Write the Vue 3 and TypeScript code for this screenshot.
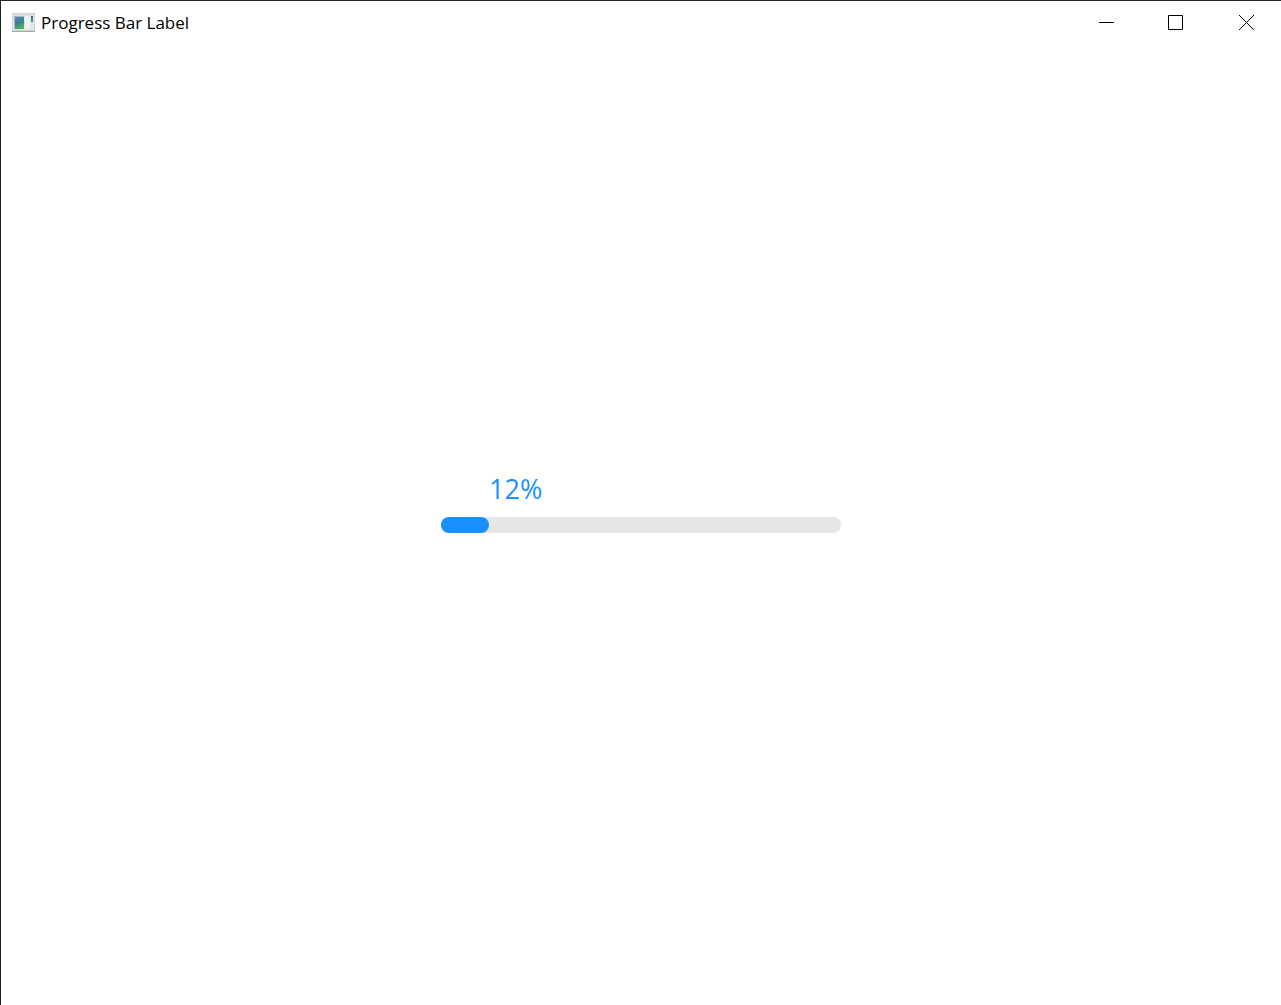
<script setup lang="ts">
import { ref } from 'vue'

const title = 'Progress Bar Label'
const progress = ref<number>(12)
</script>

<template>
  <div class="window">
    <header class="titlebar">
      <svg class="app-icon" viewBox="0 0 24 20" aria-hidden="true">
        <defs>
          <linearGradient id="pane" x1="0" y1="0" x2="0.4" y2="1">
            <stop offset="0" stop-color="#5f8fae" />
            <stop offset="0.5" stop-color="#3b7d9c" />
            <stop offset="1" stop-color="#4fae62" />
          </linearGradient>
          <linearGradient id="strip" x1="0" y1="0" x2="0" y2="1">
            <stop offset="0" stop-color="#2f5fa5" />
            <stop offset="1" stop-color="#4f9a86" />
          </linearGradient>
        </defs>
        <rect x="0" y="0" width="23" height="19" fill="#d3d5d7" />
        <rect x="1" y="1" width="21" height="2" fill="#dcdfe1" />
        <rect x="1" y="3" width="21" height="14" fill="#e0e5e8" />
        <rect x="0" y="18" width="23" height="1" fill="#9fa9ac" />
        <rect x="2" y="3" width="10" height="13" fill="#9fb9c8" />
        <rect x="3" y="4" width="9" height="12" fill="url(#pane)" />
        <rect x="13" y="3" width="5" height="13" fill="#eff1f3" />
        <rect x="19" y="3" width="2" height="6" fill="url(#strip)" />
      </svg>
      <h1 class="title">{{ title }}</h1>
      <div class="controls">
        <button type="button" aria-label="Minimize">
          <svg viewBox="0 0 16 16"><path d="M1 7.5H16" /></svg>
        </button>
        <button type="button" aria-label="Maximize">
          <svg viewBox="0 0 16 16"><path d="M.5 .5H14.500V14.500H.5Z" /></svg>
        </button>
        <button type="button" aria-label="Close">
          <svg viewBox="0 0 16 16"><path d="M1 0L16 15M16 0L1 15" /></svg>
        </button>
      </div>
    </header>
    <main class="content">
      <div class="progress">
        <div class="label-row">
          <span class="spacer" :style="{ width: progress + '%' }"></span>
          <span class="label">{{ progress }}%</span>
        </div>
        <div class="track" role="progressbar" aria-label="Progress" :aria-valuenow="progress" aria-valuemin="0" aria-valuemax="100">
          <div class="fill" :style="{ width: progress + '%' }"></div>
        </div>
      </div>
    </main>
  </div>
</template>

<style>
body {
  margin: 0;
}
</style>

<style scoped>
.window {
  box-sizing: border-box;
  display: flex;
  flex-direction: column;
  min-height: 100vh;
  border-top: 1px solid #222;
  border-left: 1px solid #222;
  background: #fff;
  font-family: "Open Sans", "Noto Sans", sans-serif;
}
.titlebar {
  display: flex;
  align-items: center;
  height: 44px;
  padding-left: 11px;
}
.app-icon {
  width: 24px;
  height: 20px;
}
.title {
  flex: 1;
  margin: 0 0 0 5px;
  color: #000;
  font-size: 17px;
  font-weight: 400;
  line-height: 24px;
}
.controls {
  display: flex;
}
.controls button {
  display: flex;
  align-items: center;
  justify-content: center;
  width: 70px;
  height: 44px;
  padding: 0;
  border: 0;
  background: transparent;
}
.controls svg {
  width: 16px;
  height: 16px;
  fill: none;
  stroke: #000;
  stroke-width: 1;
}
.content {
  display: flex;
  flex: 1;
  align-items: center;
  justify-content: center;
  padding-bottom: 56px;
}
.progress {
  width: 400px;
}
.label-row {
  display: flex;
  height: 56px;
  align-items: center;
}
.label {
  color: #1890ff;
  font-size: 27px;
  font-weight: 400;
  line-height: 36px;
}
.track {
  height: 16px;
  border-radius: 8px;
  background: #e6e6e6;
}
.fill {
  height: 100%;
  border-radius: 8px;
  background: #1890ff;
}
</style>
